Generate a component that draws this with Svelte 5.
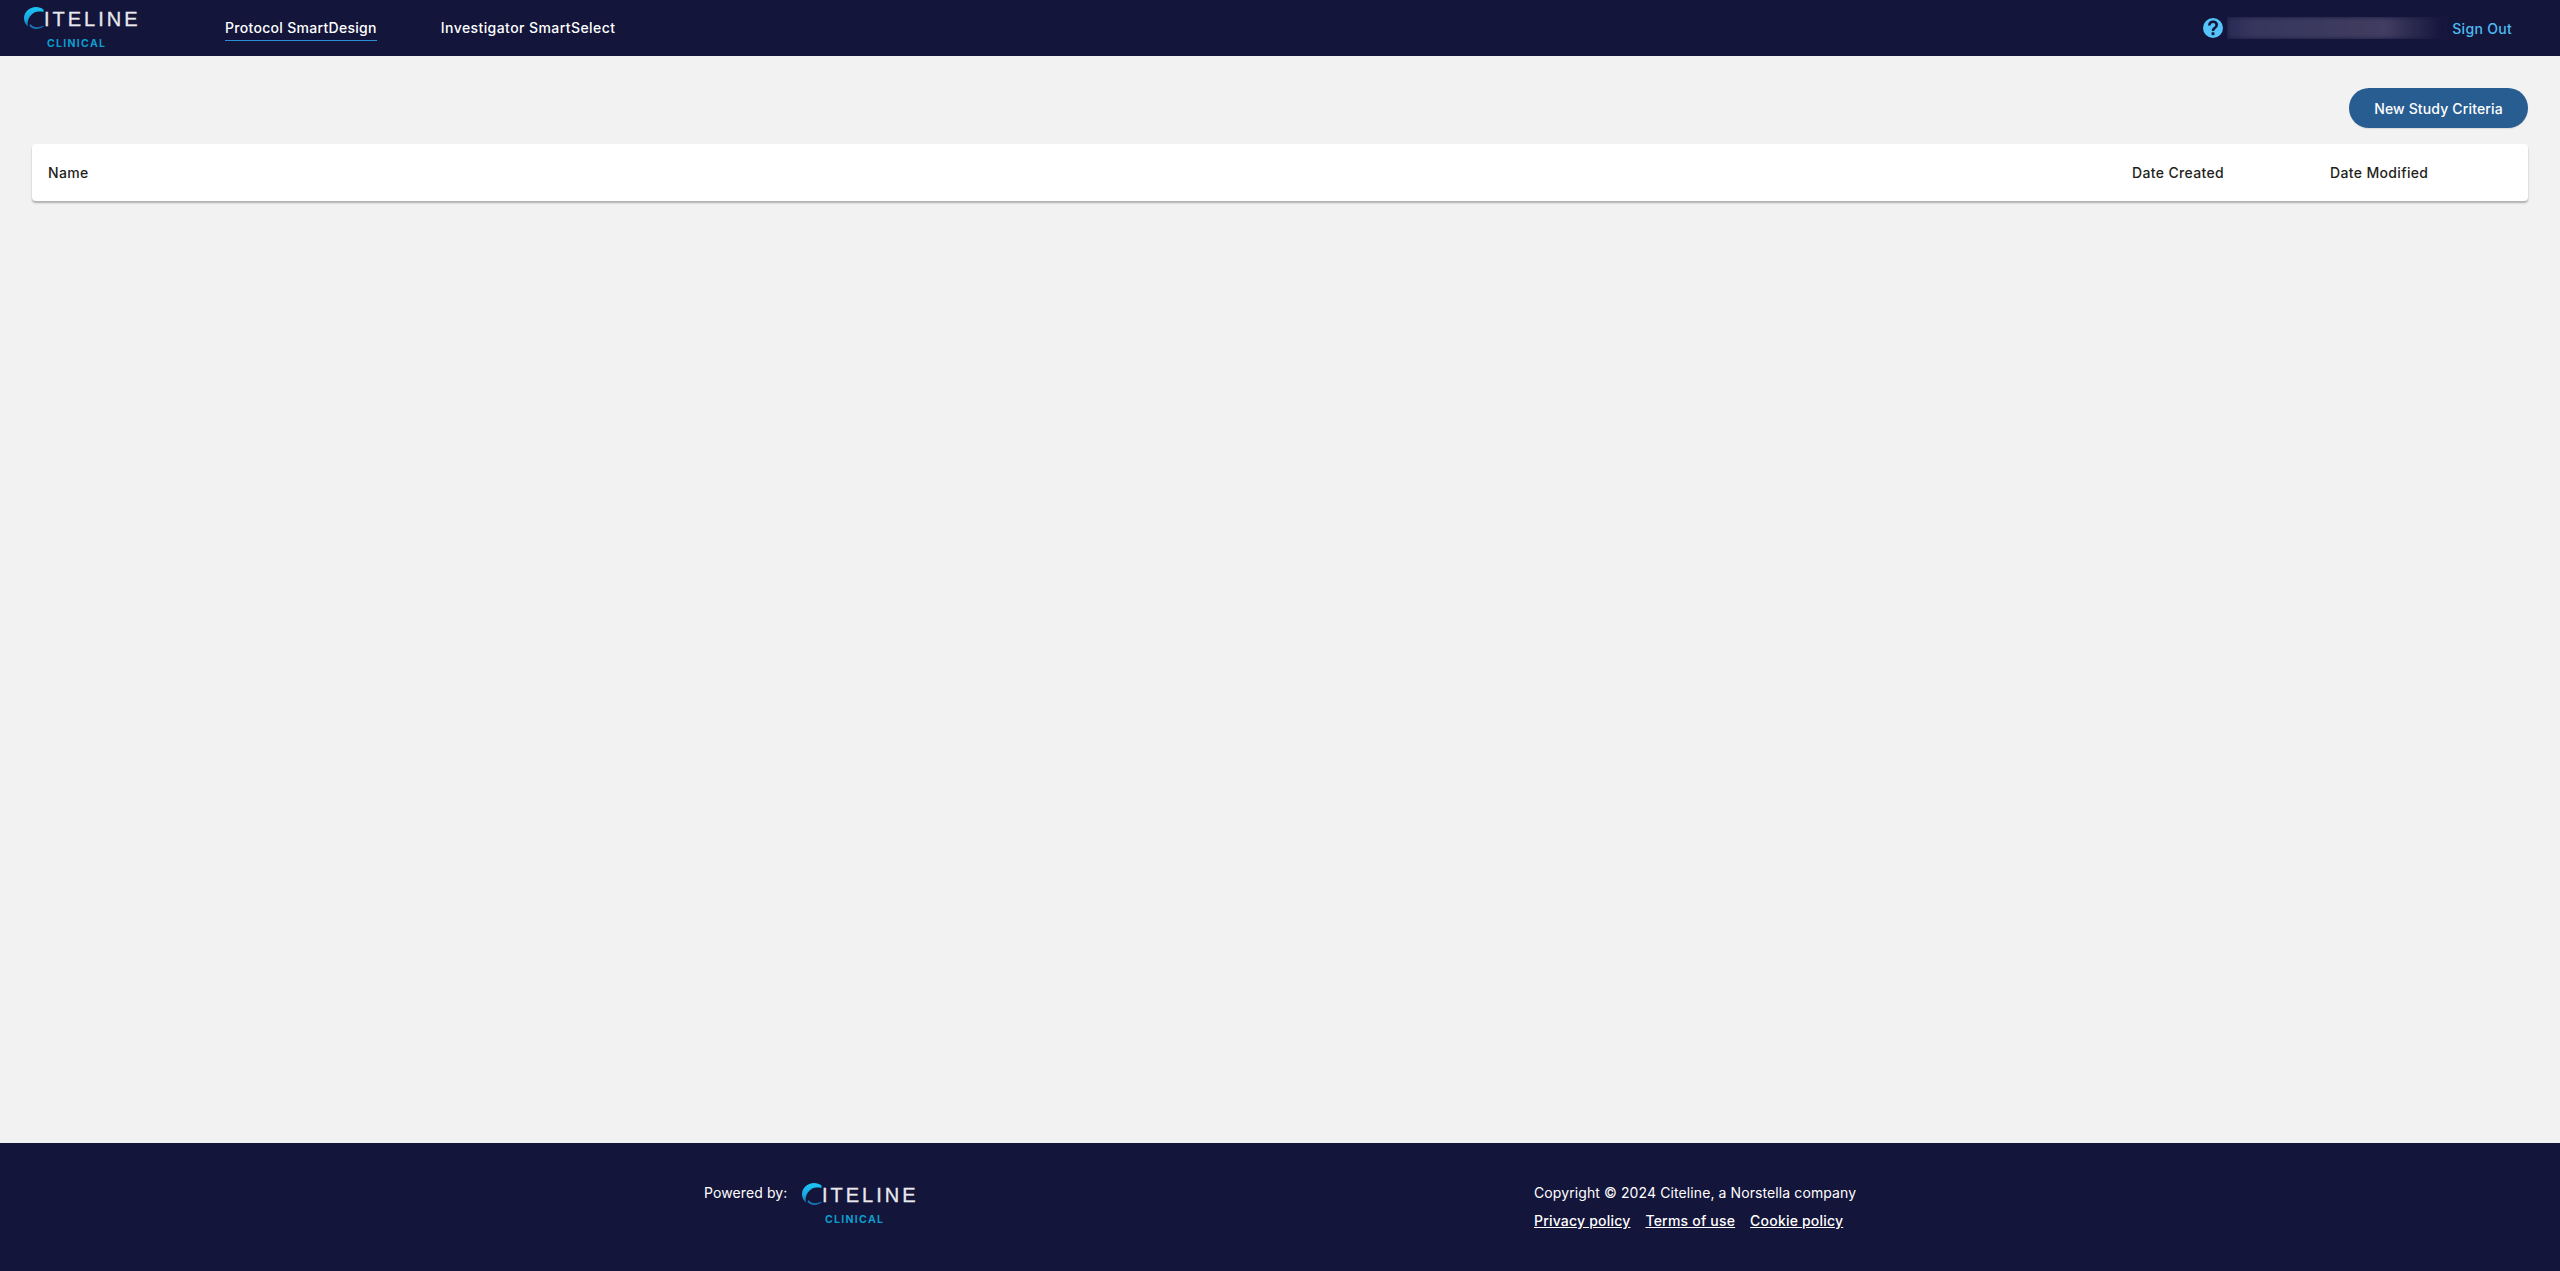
<script>
  const links = ['Privacy policy', 'Terms of use', 'Cookie policy'];
</script>

{#snippet logo()}
  <div class="logo">
    <div class="wordmark">
      <svg class="arc" viewBox="0 0 20 22" width="20" height="22" aria-hidden="true">
        <defs>
          <linearGradient id="arcfill" x1="0" y1="0" x2="0" y2="1">
            <stop offset="0" stop-color="#1cc6f6" />
            <stop offset="0.6" stop-color="#1aa8e2" />
            <stop offset="1" stop-color="#1479b8" />
          </linearGradient>
        </defs>
        <path d="M19.500 2.600C17.500 .9 15 0 12 0 5.400 0 0 5 0 11.200 0 14.500 1.500 17.500 4.300 19.600 3.600 18 3.400 16.400 3.800 14.500 4.900 9 9.500 4.800 14.500 4.600 16.500 4.500 18 4.700 19.500 5Z" fill="url(#arcfill)" />
        <path d="M6.500 17C8 19.200 10.500 20.200 13 20.200 15.500 20.200 17.500 19.600 19.500 18.500V19.600C17.500 21.300 15 22 12.500 22 9.700 22 7.300 21 5.400 19Z" fill="#1678b6" />
      </svg>
      <span class="name">ITELINE</span>
    </div>
    <div class="sub">CLINICAL</div>
  </div>
{/snippet}

<div class="page">
  <header class="top">
    <div class="top-logo">{@render logo()}</div>
    <nav class="nav">
      <span class="nav-item active">Protocol SmartDesign</span>
      <span class="nav-item wide">Investigator SmartSelect</span>
    </nav>
    <div class="account">
      <svg class="help" viewBox="0 0 20 20" width="20" height="20" aria-hidden="true">
        <circle cx="10" cy="10" r="10" fill="#54c4fb" />
        <path d="M6.300 7.500C6.300 5.200 8 3.800 10 3.800 12.200 3.800 13.700 5.200 13.700 7.100 13.700 8.900 12.500 9.600 11.300 10.400 10.200 11.100 10 11.800 10 12.900" stroke="#13153a" stroke-width="2.600" fill="none" />
        <rect x="8.600" y="14.300" width="2.800" height="2.800" fill="#13153a" />
      </svg>
      <div class="redacted"><div class="smear"></div></div>
      <span class="signout">Sign Out</span>
    </div>
  </header>

  <main class="main">
    <div class="actions"><button class="primary">New Study Criteria</button></div>
    <div class="table-head">
      <span class="col-name">Name</span>
      <span class="col-created">Date Created</span>
      <span class="col-modified">Date Modified</span>
    </div>
  </main>

  <footer class="foot">
    <div class="powered">
      <span class="powered-label">Powered by:</span>
      {@render logo()}
    </div>
    <div class="legal">
      <div>Copyright © 2024 Citeline, a Norstella company</div>
      <div class="links">
        {#each links as l}<a href="#top">{l}</a>{/each}
      </div>
    </div>
  </footer>
</div>

<style>
  :global(body) { margin: 0; background: #f2f2f2; }
  .page {
    height: 1271px; display: flex; flex-direction: column;
    font-family: Inter, "Noto Sans", sans-serif; font-size: 14px; overflow: hidden;
  }
  .top {
    height: 56px; flex: none; background: #13153a; color: #fff;
    display: flex; align-items: center;
  }
  .top-logo { margin-left: 24px; width: 201px; }
  .logo { width: 115px; }
  .wordmark { display: flex; align-items: flex-end; height: 22px; }
  .arc { flex: none; display: block; }
  .name {
    font-size: 20px; line-height: 19px; letter-spacing: 3px; color: #e9e9ee;
    font-family: "Liberation Sans", sans-serif; white-space: nowrap;
    -webkit-text-stroke: .3px #e9e9ee;
  }
  .sub {
    margin: 10px 0 0 23px; font-size: 10.500px; line-height: 10px; font-weight: 700;
    letter-spacing: 1.300px; color: #0f9bcd;
  }
  .nav { display: flex; gap: 64px; }
  .nav-item {
    font-weight: 500; line-height: 20px; padding: 3px 0 2px;
    border-bottom: 1px solid transparent; letter-spacing: .3px;
  }
  .wide { letter-spacing: .42px; }
  .active { border-bottom-color: #2a8fd6; }
  .account { margin-left: auto; display: flex; align-items: center; margin-right: 48px; }
  .help { display: block; margin-right: 4px; }
  .redacted { width: 220px; height: 22px; background: #16173f; overflow: hidden; margin-right: 5px; }
  .smear {
    height: 100%; width: 212px;
    background: linear-gradient(90deg, #2a2c56 0%, #36365e 12%, #3d3a5f 50%, #413c60 75%, #171740 100%);
    filter: blur(2px);
  }
  .signout { color: #4dbcf2; font-weight: 500; letter-spacing: .3px; }
  .main { flex: 1; padding: 32px 32px 0; }
  .actions { display: flex; justify-content: flex-end; }
  .primary {
    height: 40px; width: 179px; border: 0; border-radius: 20px; background: #285d92; color: #fff;
    font: 500 14px Inter, sans-serif; letter-spacing: .15px; box-shadow: 0 1px 1px rgba(0,0,0,.1);
  }
  .table-head {
    margin-top: 16px; height: 57px; background: #fff; border-radius: 4px;
    box-shadow: 0 2px 2px rgba(0,0,0,.28); display: flex; align-items: center;
    padding-left: 16px; color: #231f20; font-weight: 500; letter-spacing: .35px;
  }
  .col-name { flex: 1; }
  .col-created { width: 198px; }
  .col-modified { width: 198px; }
  .foot {
    height: 128px; flex: none; background: #13153a; color: #fff; display: flex; letter-spacing: .1px;
  }
  .powered { margin-left: 704px; width: 830px; display: flex; align-items: flex-start; padding-top: 40px; }
  .powered-label { width: 98px; line-height: 20px; }
  .legal { padding-top: 40px; line-height: 20px; }
  .links { display: flex; gap: 15px; margin-top: 8px; font-weight: 500; letter-spacing: .2px; }
  .links a { color: #fff; }
</style>
